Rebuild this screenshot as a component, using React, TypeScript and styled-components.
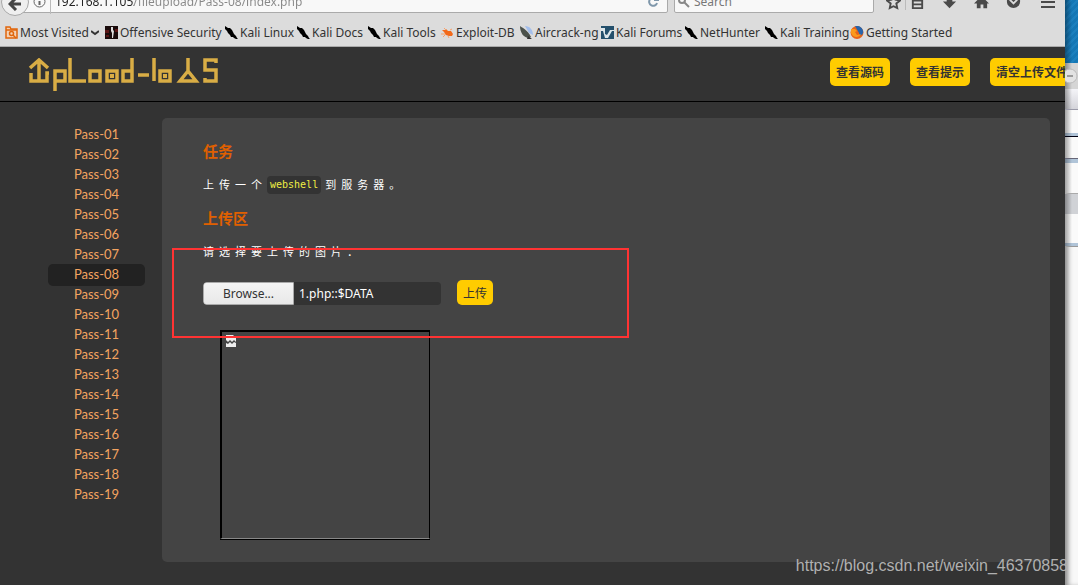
import React from 'react';
import styled, { createGlobalStyle } from 'styled-components';

const Global = createGlobalStyle`
  * { box-sizing: border-box; }
  body { margin: 0; background: #333; font-family: "Noto Sans", "Noto Sans CJK SC", sans-serif; }
  button, input { font-family: inherit; margin: 0; }
  svg { display: block; flex: none; }
`;

const Desktop = styled.div`
  position: relative;
  display: grid;
  grid-template-columns: minmax(0, 1fr) 13px;
  min-height: 100vh;
`;

const BrowserWindow = styled.div`
  display: flex;
  flex-direction: column;
  min-width: 0;
  overflow: hidden;
  background: #333;
`;

const NavBar = styled.div`
  display: flex;
  align-items: flex-end;
  height: 22px;
  padding-bottom: 9px;
  overflow: hidden;
  background: #dcdcdc;
`;

const BackButton = styled.button`
  flex: none;
  display: grid;
  place-items: center;
  width: 28px;
  height: 28px;
  margin: 0 -14px -3px 1px;
  padding: 3px 0 0;
  border: 1px solid #a8a8a8;
  border-radius: 50%;
  background: #efefef;
  color: #444;
  z-index: 1;
`;

const UrlField = styled.div`
  flex: 1;
  display: flex;
  align-items: center;
  height: 28px;
  padding: 5px 8px 0 17px;
  border: 1px solid #aaa;
  border-radius: 0 2px 2px 0;
  background: #f8f8f8;
`;

const Divider = styled.span`
  flex: none;
  width: 1px;
  height: 24px;
  margin: 0 4px;
  background: #bbb;
`;

const UrlInput = styled.input`
  flex: 1;
  min-width: 0;
  height: 20px;
  padding: 0;
  border: 0;
  outline: 0;
  font-size: 12px;
  color: transparent;
  background: linear-gradient(to right, #222 79px, #888 79px);
  background-clip: text;
`;

const SearchField = styled.label`
  flex: none;
  display: flex;
  align-items: center;
  gap: 4px;
  width: 200px;
  height: 28px;
  margin-left: 6px;
  padding: 5px 3px 0;
  border: 1px solid #aaa;
  border-radius: 2px;
  background: #f8f8f8;
`;

const SearchInput = styled.input`
  flex: 1;
  min-width: 0;
  padding: 0;
  border: 0;
  outline: 0;
  background: none;
  font-size: 12px;
  &::placeholder { color: #777; }
`;

const ToolIcons = styled.div`
  flex: none;
  display: flex;
  align-items: flex-end;
  padding: 0 10px 3px 12px;
`;

const ToolGroup = styled.div`
  display: flex;
  align-items: flex-end;
  gap: 17px;
`;

const ToolButton = styled.button`
  display: block;
  padding: 0;
  border: 0;
  background: none;
  color: #4a4a4a;
`;

const Bookmarks = styled.nav`
  display: flex;
  align-items: center;
  gap: 6px;
  height: 25px;
  padding: 0 5px 3px;
  border-bottom: 1px solid #aaa;
  background: #dcdcdc;
`;

const Bookmark = styled.a<{ $width: number }>`
  flex: none;
  display: flex;
  align-items: center;
  gap: 2px;
  width: ${(p) => p.$width}px;
  font-size: 12px;
  line-height: 16px;
  color: #333;
  text-decoration: none;
  white-space: nowrap;
`;

const SiteHeader = styled.header`
  display: flex;
  align-items: flex-start;
  justify-content: space-between;
  height: 55px;
  padding: 11px 0 0 28px;
  border-bottom: 1px solid #000;
`;

const Actions = styled.div`
  display: flex;
  gap: 20px;
  margin-right: -9px;
`;

const YellowButton = styled.button<{ $small?: boolean }>`
  height: ${(p) => (p.$small ? 25 : 28)}px;
  padding: 0 6px;
  border: 0;
  border-radius: 5px;
  background: #fc0;
  color: #333;
  font-size: 12px;
  font-weight: ${(p) => (p.$small ? 400 : 700)};
  white-space: nowrap;
`;

const PageBody = styled.div`
  flex: 1;
  display: flex;
  align-items: flex-start;
  padding: 16px 15px 23px 48px;
`;

const PassList = styled.ul`
  flex: none;
  width: 97px;
  margin: 6px 17px 0 0;
  padding: 0;
  list-style: none;
`;

const PassLink = styled.a<{ $active: boolean }>`
  display: block;
  height: 22px;
  margin-bottom: -2px;
  border-radius: 5px;
  background: ${(p) => (p.$active ? '#222' : 'transparent')};
  color: #f4a460;
  font-family: Lato, sans-serif;
  font-size: 13px;
  line-height: 21px;
  text-align: center;
  text-decoration: none;
`;

const Panel = styled.main`
  flex: 1;
  min-width: 0;
  min-height: 444px;
  padding: 21px 41px;
  border-radius: 5px;
  background: #444;
  color: #fff;
`;

const Heading = styled.h3`
  margin: 0;
  color: #e06000;
  font-size: 15px;
  line-height: 24px;
`;

const Text = styled.p`
  display: flex;
  align-items: center;
  height: 20px;
  margin: 12px 0 11px;
  font-size: 11px;
  line-height: 20px;
  letter-spacing: 5px;
`;

const Code = styled.code`
  height: 18px;
  margin-right: 4px;
  padding: 0 3px;
  border-radius: 4px;
  background: #333;
  color: #ee4;
  font-family: "DejaVu Sans Mono", monospace;
  font-size: 10px;
  line-height: 18px;
  letter-spacing: 0;
`;

const UploadForm = styled.form`
  display: flex;
  align-items: flex-end;
  gap: 16px;
  margin-top: 18px;
`;

const FilePicker = styled.div`
  display: flex;
  width: 238px;
  height: 23px;
  border-radius: 4px;
  overflow: hidden;
  background: #333;
`;

const BrowseButton = styled.button`
  flex: none;
  width: 91px;
  padding: 0;
  border: 1px solid #aaa;
  border-radius: 3px 0 0 3px;
  background: linear-gradient(#f4f4f4, #e8e8e8);
  color: #333;
  font-size: 12px;
`;

const FileName = styled.input`
  flex: 1;
  min-width: 0;
  padding: 0 5px;
  border: 0;
  outline: 0;
  background: none;
  color: #fff;
  font-size: 12px;
`;

const Preview = styled.div`
  width: 210px;
  height: 209px;
  margin: 25px 0 0 17px;
  padding: 3px 4px;
  border: 2px solid #000;
  border-right-width: 1px;
  border-bottom: 1px solid #888;
  box-shadow: 0 1px #000;
`;

const Highlight = styled.div`
  position: absolute;
  left: 172px;
  top: 248px;
  width: 457px;
  height: 90px;
  border: 2px solid #f33;
`;

const Watermark = styled.div`
  position: absolute;
  right: 10px;
  bottom: 9px;
  color: #b0b0b0;
  font-family: "Liberation Sans", sans-serif;
  font-size: 16px;
  line-height: 20px;
`;

const Backdrop = styled.aside`
  display: flex;
  flex-direction: column;
  overflow: hidden;
  background: #f8f8f8;
  box-shadow: inset 5px 0 5px -2px #888;
`;

const Strip = styled.div<{ $height: number; $fill: string; $line?: string }>`
  flex: none;
  display: flex;
  align-items: center;
  height: ${(p) => p.$height}px;
  border-bottom: ${(p) => (p.$line ? `1px solid ${p.$line}` : '0')};
  background: linear-gradient(to right, rgba(0, 0, 0, 0.35), transparent 7px), ${(p) => p.$fill};
`;

const strips = [
  { height: 63, fill: 'repeating-linear-gradient(135deg, #1477b5 0 3px, #1c80be 3px 5px)' },
  { height: 26, fill: '#d5d5d5', minimize: true },
  { height: 21, fill: 'linear-gradient(#f4f4f8, #d4d4da)', line: '#9a9aa8' },
  { height: 23, fill: '#fafafa' },
  { height: 4, fill: '#b0c4d8', line: '#001' },
  { height: 22, fill: '#fafafa', line: '#667' },
  { height: 4, fill: '#b0c4d8' },
  { height: 31, fill: '#fafafa', line: '#aaa' },
  { height: 20, fill: '#d0d2d6' },
  { height: 29, fill: '#fafafa' },
  { height: 4, fill: '#b0c4d8', line: '#999' },
];

const Dragon = () => (
  <svg width="13" height="13" viewBox="0 0 13 13">
    <path d="M0 0l3 2 2 0 2 2 1 2 1 2 2 2 1 2 1 1-2 0-2-1-1-1-2 0-1-2-2-2-1-2-2-2-1-1 1-1z" fill="#000" />
  </svg>
);

const icons: Record<string, React.ReactNode> = {
  folder: (
    <svg width="13" height="13" viewBox="0 0 13 13" fill="none" stroke="#e0660c" strokeWidth="1.5">
      <path d="M1 12V1h4l1 2h6v9z" fill="#f4d2b4" />
      <path d="M1 4h11" />
      <circle cx="6.500" cy="7.500" r="2" />
      <path d="M8 9l3 3" />
    </svg>
  ),
  offsec: (
    <svg width="13" height="13" viewBox="0 0 13 13">
      <path d="M0 0h13v13H0z" fill="#1a0b0b" />
      <path d="M0 4h4v3H0zM10 3h3v3h-3zM1 9h3v2H1z" fill="#5a1515" />
      <path d="M6 1h2v3l1 1-1 7H7l0-5-1-2z" fill="#ddd" />
    </svg>
  ),
  dragon: <Dragon />,
  exploit: (
    <svg width="13" height="13" viewBox="0 0 13 13">
      <path d="M1 4l3 0 1-1 2 2 3 0 2 3-1 2-3 0-3-1-2-3z" fill="#f26a1b" />
      <path d="M0 8h4M2 11l3-3M7 10l1 2M9 4l2-1M3 2l2 2" stroke="#f7a06a" />
    </svg>
  ),
  aircrack: (
    <svg width="13" height="13" viewBox="0 0 13 13">
      <path d="M5 0c5 0 8 4 8 9L9 7z" fill="#a4bfec" />
      <path d="M0 0c1 1 8 4 11 11l-2 1C4 12 0 7 0 0z" fill="#4c524c" />
      <path d="M8 10l4 3H7z" fill="#333" />
    </svg>
  ),
  forums: (
    <svg width="13" height="13" viewBox="0 0 13 13">
      <path d="M0 0h13v13H0z" fill="#24506c" />
      <path d="M0 2h4v6l2 1 3-5h4v1h-2l-4 7H4L2 5H0z" fill="#dce6ea" />
    </svg>
  ),
  firefox: (
    <svg width="14" height="13" viewBox="0 0 14 13">
      <circle cx="7" cy="6.500" r="6.500" fill="#e8641b" />
      <path d="M5 0c5-1 9 3 8 7-1 3-4 3-4 0z" fill="#2764ab" />
      <path d="M1 3l4 0 2 2-2 1 2 3 4-1c-2 4-8 4-10-1z" fill="#fa9a1c" />
    </svg>
  ),
};

const bookmarks = [
  { icon: 'folder', label: 'Most Visited', width: 94, menu: true },
  { icon: 'offsec', label: 'Offensive Security', width: 114 },
  { icon: 'dragon', label: 'Kali Linux', width: 66 },
  { icon: 'dragon', label: 'Kali Docs', width: 65 },
  { icon: 'dragon', label: 'Kali Tools', width: 67 },
  { icon: 'exploit', label: 'Exploit-DB', width: 73 },
  { icon: 'aircrack', label: 'Aircrack-ng', width: 75 },
  { icon: 'forums', label: 'Kali Forums', width: 78 },
  { icon: 'dragon', label: 'NetHunter', width: 74 },
  { icon: 'dragon', label: 'Kali Training', width: 79 },
  { icon: 'firefox', label: 'Getting Started', width: 98 },
];

const tools = [
  { name: 'Library', art: <path d="M3 1h10v13H3zM3 6h10M3 10h10" fill="none" stroke="currentColor" strokeWidth="2" /> },
  { name: 'Downloads', art: <path d="M5 0h6v7h4l-7 7-7-7h4z" fill="currentColor" /> },
  { name: 'Home', art: <path d="M8 1l8 8h-2v5h-4v-4H7v4H3V9H0z" fill="currentColor" /> },
  { name: 'Pocket', art: <><path d="M1 1h14v6c0 9-14 9-14 0z" fill="currentColor" /><path d="M4 5l4 4 4-4" fill="none" stroke="#dcdcdc" strokeWidth="2" /></> },
];

const Logo = () => (
  <svg width="190" height="34" viewBox="0 0 190 34" fill="none" stroke="#d9ad45" strokeWidth="3.500" role="img" aria-label="Upload-labs">
    <path d="M3 15v8h16v-8h2M11 23V2M2 10l9-8 9 8" />
    <path d="M27 33V13h10v10H27M42 0v23h16M62 13h10v10H62zM79 13h10v10H79zM104 0v23h-9V13h9M110 17h11M126 0v23M132 13h10v10h-10zM160 0v13l-8 10h16l-8-10M188 5V2h-11v10h11v11h-11v-3" />
    <path d="M82 16h4v4h-4zM135 16h4v4h-4z" fill="#d9ad45" stroke="none" />
  </svg>
);

export default function App() {
  const passes = Array.from({ length: 19 }, (_, i) => `Pass-${String(i + 1).padStart(2, '0')}`);
  return (
    <Desktop>
      <Global />
      <BrowserWindow>
        <NavBar>
          <BackButton aria-label="Back">
            <svg width="14" height="14" viewBox="0 0 14 14" fill="none" stroke="currentColor" strokeWidth="3"><path d="M8 1L2 7l6 6M2 7h11" /></svg>
          </BackButton>
          <UrlField>
            <svg width="13" height="13" viewBox="0 0 13 13" fill="none" stroke="#666"><circle cx="6.500" cy="6.500" r="5.500" /><path d="M6.500 3v1M6.500 6v4" strokeWidth="2" /></svg>
            <Divider />
            <UrlInput aria-label="Address" defaultValue="192.168.1.105/fileupload/Pass-08/index.php" />
            <svg width="12" height="12" viewBox="0 0 12 12" fill="none" stroke="#7f97ab" strokeWidth="2"><path d="M10 7a4 4 0 1 1-1-4M11 0v4H7" /></svg>
          </UrlField>
          <SearchField>
            <svg width="12" height="12" viewBox="0 0 12 12" fill="none" stroke="#888" strokeWidth="2"><circle cx="4" cy="4" r="3" /><path d="M6 6l5 5" /></svg>
            <SearchInput aria-label="Search" placeholder="Search" />
          </SearchField>
          <ToolIcons>
            <ToolButton aria-label="Bookmark">
              <svg width="15" height="15" viewBox="0 0 16 16"><path d="M8 1l2 4 5 1-4 3 1 5-4-2-4 2 1-5-4-3 5-1z" fill="none" stroke="currentColor" strokeWidth="2" /></svg>
            </ToolButton>
            <Divider />
            <ToolGroup>
              {tools.map((t) => (
                <ToolButton key={t.name} aria-label={t.name}>
                  <svg width="15" height="15" viewBox="0 0 16 16">{t.art}</svg>
                </ToolButton>
              ))}
              <ToolButton aria-label="Menu">
                <svg width="17" height="14" viewBox="0 0 17 14" stroke="currentColor" strokeWidth="2"><path d="M3 1h14M3 6h14M3 11h14" /></svg>
              </ToolButton>
            </ToolGroup>
          </ToolIcons>
        </NavBar>
        <Bookmarks>
          {bookmarks.map((b) => (
            <Bookmark key={b.label} href="#" $width={b.width}>
              {icons[b.icon]}
              {b.label}
              {b.menu && <svg width="8" height="6" viewBox="0 0 8 6" fill="none" stroke="#333" strokeWidth="2"><path d="M0 1l4 3 4-3" /></svg>}
            </Bookmark>
          ))}
        </Bookmarks>
        <SiteHeader>
          <Logo />
          <Actions>
            <YellowButton>查看源码</YellowButton>
            <YellowButton>查看提示</YellowButton>
            <YellowButton>清空上传文件</YellowButton>
          </Actions>
        </SiteHeader>
        <PageBody>
          <PassList>
            {passes.map((p) => (
              <li key={p}><PassLink href="#" $active={p === 'Pass-08'}>{p}</PassLink></li>
            ))}
          </PassList>
          <Panel>
            <Heading>任务</Heading>
            <Text>上传一个<Code>webshell</Code>到服务器。</Text>
            <Heading>上传区</Heading>
            <Text>请选择要上传的图片：</Text>
            <UploadForm onSubmit={(e) => e.preventDefault()}>
              <FilePicker>
                <BrowseButton type="button">Browse...</BrowseButton>
                <FileName aria-label="上传文件" readOnly value="1.php::$DATA" />
              </FilePicker>
              <YellowButton $small>上传</YellowButton>
            </UploadForm>
            <Preview>
              <svg width="10" height="12" viewBox="0 0 10 12"><path d="M0 0h7l3 3v9H0z" fill="#eee" /><path d="M0 5l2 2 2-2 2 2 2-2 2 2v1L8 7 6 9 4 7 2 9 0 8zM2 2h4v1H2z" fill="#444" /></svg>
            </Preview>
          </Panel>
        </PageBody>
      </BrowserWindow>
      <Backdrop>
        {strips.map((s, i) => (
          <Strip key={i} $height={s.height} $fill={s.fill} $line={s.line}>
            {s.minimize && <svg width="13" height="16" viewBox="0 0 13 16" fill="none" stroke="#bbb"><circle cx="5" cy="8" r="7" fill="#e2e2e2" /><path d="M2 8h6" stroke="#555" /></svg>}
          </Strip>
        ))}
      </Backdrop>
      <Highlight />
      <Watermark>https://blog.csdn.net/weixin_46370858</Watermark>
    </Desktop>
  );
}
